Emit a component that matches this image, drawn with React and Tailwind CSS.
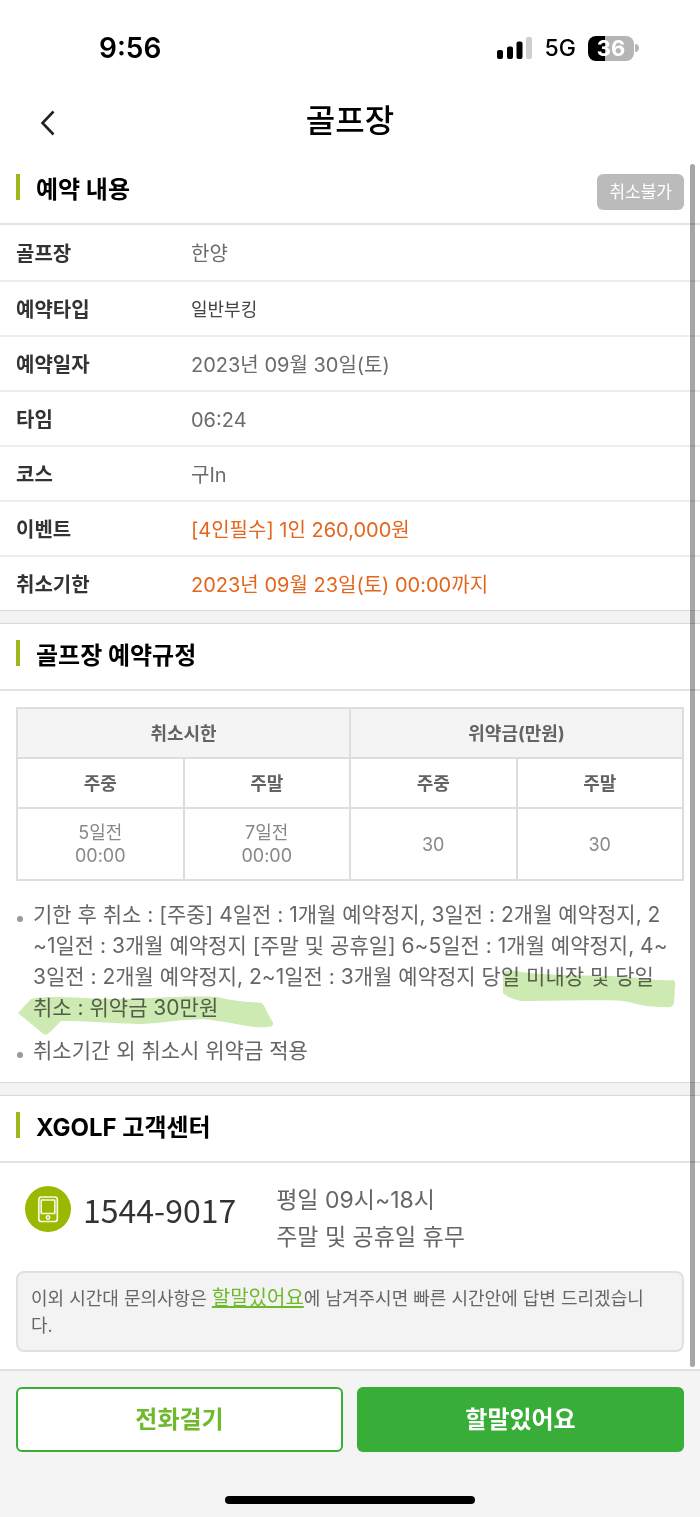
import React from 'react'

const bookingRows = [
    { label: '골프장', value: '한양', style: 'text-xl text-[#6b6b6b]' },
    { label: '예약타입', value: '일반부킹', style: 'text-lg text-[#444]' },
    { label: '예약일자', value: '2023년 09월 30일(토)', style: 'text-xl text-[#6b6b6b]' },
    { label: '타임', value: '06:24', style: 'text-xl text-[#6b6b6b]' },
    { label: '코스', value: '구In', style: 'text-xl text-[#6b6b6b]' },
    { label: '이벤트', value: '[4인필수] 1인 260,000원', style: 'text-xl text-[#e3661e]' },
    { label: '취소기한', value: '2023년 09월 23일(토) 00:00까지', style: 'text-xl text-[#e3661e]' },
];

const StatusBar = () => {
    return (
        <div className="flex h-20 items-center justify-between pt-4 pr-[61px] pl-[99px] text-black">
            <span className="text-[28px] leading-8 font-semibold">9:56</span>
            <div className="flex items-center">
                <svg width="36" height="24" viewBox="0 0 36 24" aria-hidden="true">
                    <rect x="0" y="14" width="6" height="9" rx="2" />
                    <rect x="10" y="10.500" width="6" height="12.500" rx="2" />
                    <rect x="19.500" y="5.500" width="6" height="17.500" rx="2" />
                    <rect x="29" y="1" width="6" height="22" rx="2" fill="#cfcfcf" />
                </svg>
                <span className="ml-3 text-[23px] leading-8 font-medium">5G</span>
                <div className="ml-3 flex items-center">
                    <div className="flex h-[25px] w-[46px] items-center justify-center rounded-lg bg-linear-to-r from-black from-36% to-[#b5b5b5] to-36% text-[22px] leading-6 font-bold text-white">
                        36
                    </div>
                    <div className="ml-px h-2 w-1 rounded-r-full bg-[#b5b5b5]" />
                </div>
            </div>
        </div>
    )
}

const SectionTitle = ({ children, action }) => {
    return (
        <div className="flex justify-between border-b-2 border-[#e2e2e2] px-4 pt-4">
            <div className="flex h-[49px] items-start gap-4">
                <span className="h-[26px] w-1 bg-[#9bb81d]" />
                <h2 className="text-2xl leading-[31px] font-bold text-black">{children}</h2>
            </div>
            {action}
        </div>
    )
}

const Divider = () => <div className="h-[14px] border-y border-[#d9d9d9] bg-[#f3f3f3]" />

const PhoneIcon = () => {
    return (
        <svg width="46" height="46" viewBox="0 0 46 46" fill="none" stroke="#f7fae6" aria-hidden="true">
            <circle cx="23" cy="23" r="23" fill="#9bb800" stroke="none" />
            <rect x="13.800" y="11" width="18.500" height="24.500" rx="2.500" strokeWidth="1.700" />
            <rect x="16.200" y="14" width="13.600" height="13.500" rx="0.500" strokeWidth="1.600" />
            <circle cx="23" cy="31.500" r="1.700" strokeWidth="1.500" />
        </svg>
    )
}

const RuleTable = () => {
    const cell = 'border-2 border-[#ddd] align-middle text-center';
    return (
        <table className="w-full table-fixed border-collapse text-lg leading-[23px] text-[#888]">
            <thead className="text-[#636363]">
                <tr className="h-[50px] bg-[#f4f4f4]">
                    <th colSpan={2} className={cell}>취소시한</th>
                    <th colSpan={2} className={cell}>위약금(만원)</th>
                </tr>
                <tr className="h-[50px]">
                    <th className={cell}>주중</th>
                    <th className={cell}>주말</th>
                    <th className={cell}>주중</th>
                    <th className={cell}>주말</th>
                </tr>
            </thead>
            <tbody>
                <tr className="h-[72px]">
                    <td className={cell}>5일전<br />00:00</td>
                    <td className={cell}>7일전<br />00:00</td>
                    <td className={cell}>30</td>
                    <td className={cell}>30</td>
                </tr>
            </tbody>
        </table>
    )
}

// Marker strokes drawn by hand over the penalty sentence
const Marker = () => {
    return (
        <svg
            className="pointer-events-none absolute top-0 -left-4 mix-blend-multiply"
            width="664"
            height="140"
            viewBox="0 0 664 140"
            fill="#cdeab2"
            aria-hidden="true"
        >
            <path d="M486 74 Q490 69 504 73 C540 78 590 75 620 79 Q640 82 656 81 Q659 82 658 88 L657 104 Q656 109 649 108 C635 108 625 107 612 103 C595 100 560 102 504 102 Q490 99 486 94 Z" />
            <path d="M1 114 L14 100 C30 96 60 99 90 100 C125 101 160 96 200 98 C225 104 240 103 244 104 Q247 105 249 111 L256 124 Q257 128 250 128 C235 130 215 123 200 122 C180 117 150 124 125 125 C100 125 80 122 44 122 L32 134 Q28 138 23 132 Z" />
        </svg>
    )
}

const App = () => {
    return (
        <div className="flex min-h-screen flex-col bg-white font-['Inter','Noto_Sans_CJK_KR',sans-serif]">
            <StatusBar />

            <header className="grid h-[78px] grid-cols-[64px_1fr_64px] items-center px-4">
                <button type="button" aria-label="뒤로" className="flex h-12 w-16 items-center justify-center pt-2 text-[#222]">
                    <svg width="16" height="26" viewBox="0 0 16 26" fill="none" stroke="currentColor" strokeWidth="2.600">
                        <path d="M13.500 1.500 L2.500 13 L13.500 24.500" />
                    </svg>
                </button>
                <h1 className="pt-1 text-center text-[32px] leading-10 font-medium text-black">골프장</h1>
            </header>

            <main className="relative grow">
                <section>
                    <SectionTitle
                        action={
                            <button type="button" disabled className="h-9 rounded-md bg-[#bbb] px-3 text-[17px] leading-6 text-white">
                                취소불가
                            </button>
                        }
                    >
                        예약 내용
                    </SectionTitle>
                    <dl className="divide-y-2 divide-[#ededed]">
                        {bookingRows.map((row) => (
                            <div key={row.label} className="flex h-[55px] items-center px-4 pt-[2px] first:h-[57px] last:h-[53px]">
                                <dt className="w-[175px] text-xl font-bold text-[#333]">{row.label}</dt>
                                <dd className={row.style}>{row.value}</dd>
                            </div>
                        ))}
                    </dl>
                </section>

                <Divider />

                <section>
                    <SectionTitle>골프장 예약규정</SectionTitle>
                    <div className="px-4 pt-4">
                        <RuleTable />
                    </div>
                    <ul className="flex flex-col gap-3 pt-[18px] pr-4 pb-4 pl-[33px] text-[21px] leading-[31px] text-[#666]">
                        <li className="relative">
                            <span className="absolute top-[17px] -left-4 size-[6px] rounded-full bg-[#999]" />
                            기한 후 취소 : [주중] 4일전 : 1개월 예약정지, 3일전 : 2개월 예약정지, 2
                            <br />
                            ~1일전 : 3개월 예약정지 [주말 및 공휴일] 6~5일전 : 1개월 예약정지, 4~
                            <br />
                            3일전 : 2개월 예약정지, 2~1일전 : 3개월 예약정지 당일 미내장 및 당일
                            <br />
                            취소 : 위약금 30만원
                            <Marker />
                        </li>
                        <li className="relative">
                            <span className="absolute top-[17px] -left-4 size-[6px] rounded-full bg-[#999]" />
                            취소기간 외 취소시 위약금 적용
                        </li>
                    </ul>
                </section>

                <Divider />

                <section>
                    <SectionTitle>XGOLF 고객센터</SectionTitle>
                    <div className="flex items-start gap-10 px-[25px] pt-[19px]">
                        <div className="flex items-center gap-3 pt-1">
                            <PhoneIcon />
                            <span className="font-['Noto_Sans_CJK_KR',sans-serif] text-[32px] leading-[42px] text-[#333]">1544-9017</span>
                        </div>
                        <p className="text-[23px] leading-[37px] text-[#666]">
                            평일 09시~18시
                            <br />
                            주말 및 공휴일 휴무
                        </p>
                    </div>
                    <p className="mx-4 mt-[15px] mb-4 rounded-lg border-2 border-[#e0e0e0] bg-[#f3f3f3] px-[13px] pt-3 pb-[11px] text-lg leading-[27px] text-[#666]">
                        이외 시간대 문의사항은 <a href="#talk" className="text-xl leading-[27px] text-[#6fb92c] underline">할말있어요</a>에 남겨주시면 빠른 시간안에 답변 드리겠습니
                        <br />
                        다.
                    </p>
                </section>

                <div className="absolute top-[6px] right-[5px] bottom-[2px] w-[5px] rounded-full bg-black/35" />
            </main>

            <footer className="border-t-2 border-[#e0e0e0] bg-[#f4f4f4] pt-4">
                <div className="grid grid-cols-2 gap-[14px] px-4">
                    <button type="button" className="h-[65px] rounded-md border-2 border-[#38ae38] bg-white text-2xl font-bold text-[#6fb92c]">
                        전화걸기
                    </button>
                    <button type="button" className="h-[65px] rounded-md bg-[#38ae38] text-2xl font-bold text-white">
                        할말있어요
                    </button>
                </div>
                <div className="mx-auto mt-11 mb-[13px] h-2 w-[250px] rounded-full bg-black" />
            </footer>
        </div>
    )
}

export default App
